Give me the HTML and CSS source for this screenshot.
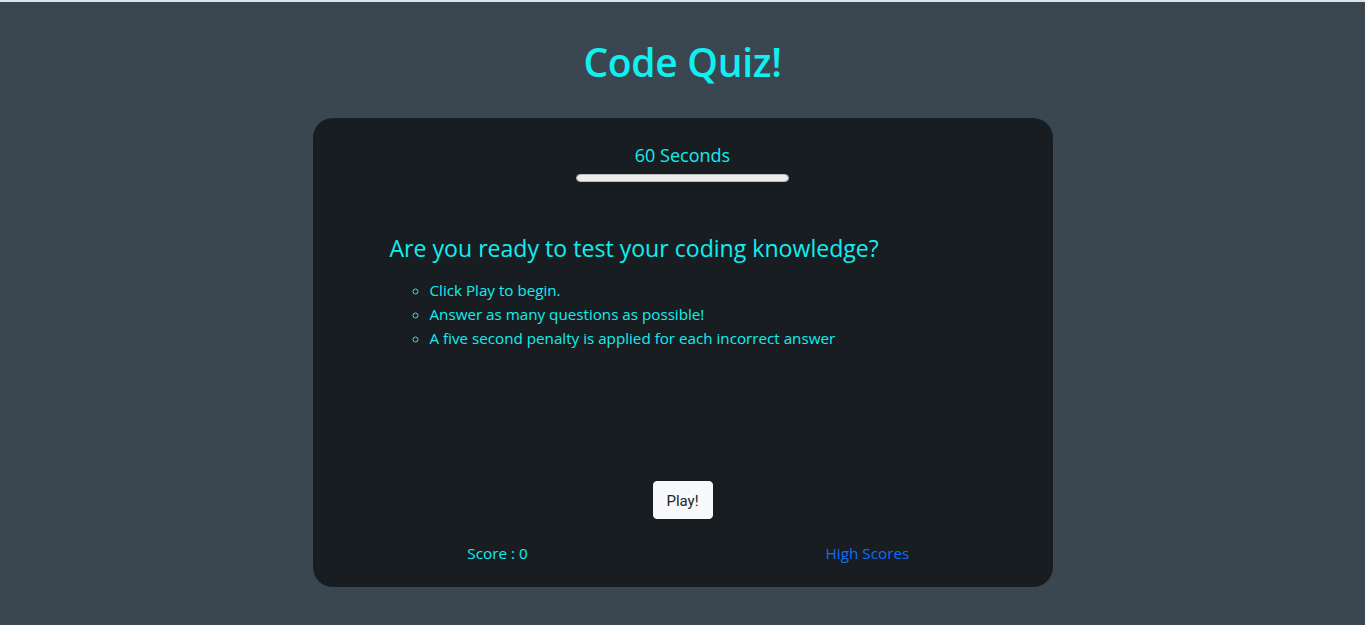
FILE: index.html
```html
<!DOCTYPE html>
<html lang="en">
<head>
<meta charset="utf-8">
<title>Code Quiz</title>
<link rel="stylesheet" href="styles.css">
</head>
<body>
<header class="page-header">
  <h1 class="title">Code Quiz!</h1>
</header>
<main class="card">
  <div class="timer">
    <p class="timer-text">60 Seconds</p>
    <div class="progress"><div class="progress-fill"></div></div>
  </div>
  <section class="intro">
    <h4 class="intro-heading">Are you ready to test your coding knowledge?</h4>
    <ul class="intro-list">
      <li>Click Play to begin.</li>
      <li>Answer as many questions as possible!</li>
      <li>A five second penalty is applied for each incorrect answer</li>
    </ul>
  </section>
  <div class="actions">
    <button class="play-btn" type="button">Play!</button>
  </div>
  <footer class="card-footer">
    <div class="footer-col score">Score : 0</div>
    <div class="footer-col"><a class="high-scores" href="#">High Scores</a></div>
  </footer>
</main>
</body>
</html>
```

FILE: styles.css
```css
* { box-sizing: border-box; }

html, body {
  margin: 0;
  padding: 0;
}

body {
  background: #3a4750;
  border-top: 2px solid #dfe3e6;
  font-family: "Open Sans", "Noto Sans", sans-serif;
  color: #00f5f5;
  min-height: 625px;
}

.page-header {
  display: flex;
  justify-content: center;
  padding-top: 36px;
}

.title {
  margin: 0;
  font-size: 39px;
  line-height: 48px;
  font-weight: 600;
  color: #10f0f0;
  letter-spacing: -0.3px;
}

.card {
  width: 740px;
  height: 469px;
  margin: 32px auto 0;
  background: #181d21;
  border-radius: 20px;
  display: flex;
  flex-direction: column;
  padding: 22px 0 22px;
}

.timer {
  display: flex;
  flex-direction: column;
  align-items: center;
}

.timer-text {
  margin: 0;
  font-size: 18px;
  line-height: 30px;
  color: #10eef0;
}

.progress {
  margin-top: 4px;
  width: 213px;
  height: 8px;
  border-radius: 4px;
  background: #ececec;
  border: 1px solid #b9bcbf;
  overflow: hidden;
}

.progress-fill {
  width: 100%;
  height: 100%;
  background: #ececec;
}

.intro {
  padding-left: 77px;
  margin-top: 52px;
}

.intro-heading {
  margin: 0 0 15px;
  font-size: 23.1px;
  line-height: 29px;
  font-weight: 400;
  color: #10eef0;
}

.intro-list {
  margin: 0;
  padding-left: 40px;
  list-style-type: circle;
  font-size: 15.2px;
  line-height: 24px;
  color: #10eef0;
}

.actions {
  margin-top: auto;
  display: flex;
  justify-content: center;
}

.play-btn {
  font-family: Roboto, "Open Sans", sans-serif;
  font-size: 15px;
  line-height: 24px;
  padding: 7px 12px;
  width: 60px;
  height: 38px;
  border: 1px solid #f8f9fa;
  border-radius: 4px;
  background: #f8f9fa;
  color: #212529;
  cursor: pointer;
}

.card-footer {
  margin-top: 22px;
  display: grid;
  grid-template-columns: 1fr 1fr;
  font-size: 15.3px;
  line-height: 24px;
}

.footer-col {
  text-align: center;
}

.score {
  color: #10eef0;
}

.high-scores {
  color: #0d6efd;
  text-decoration: none;
}
```
